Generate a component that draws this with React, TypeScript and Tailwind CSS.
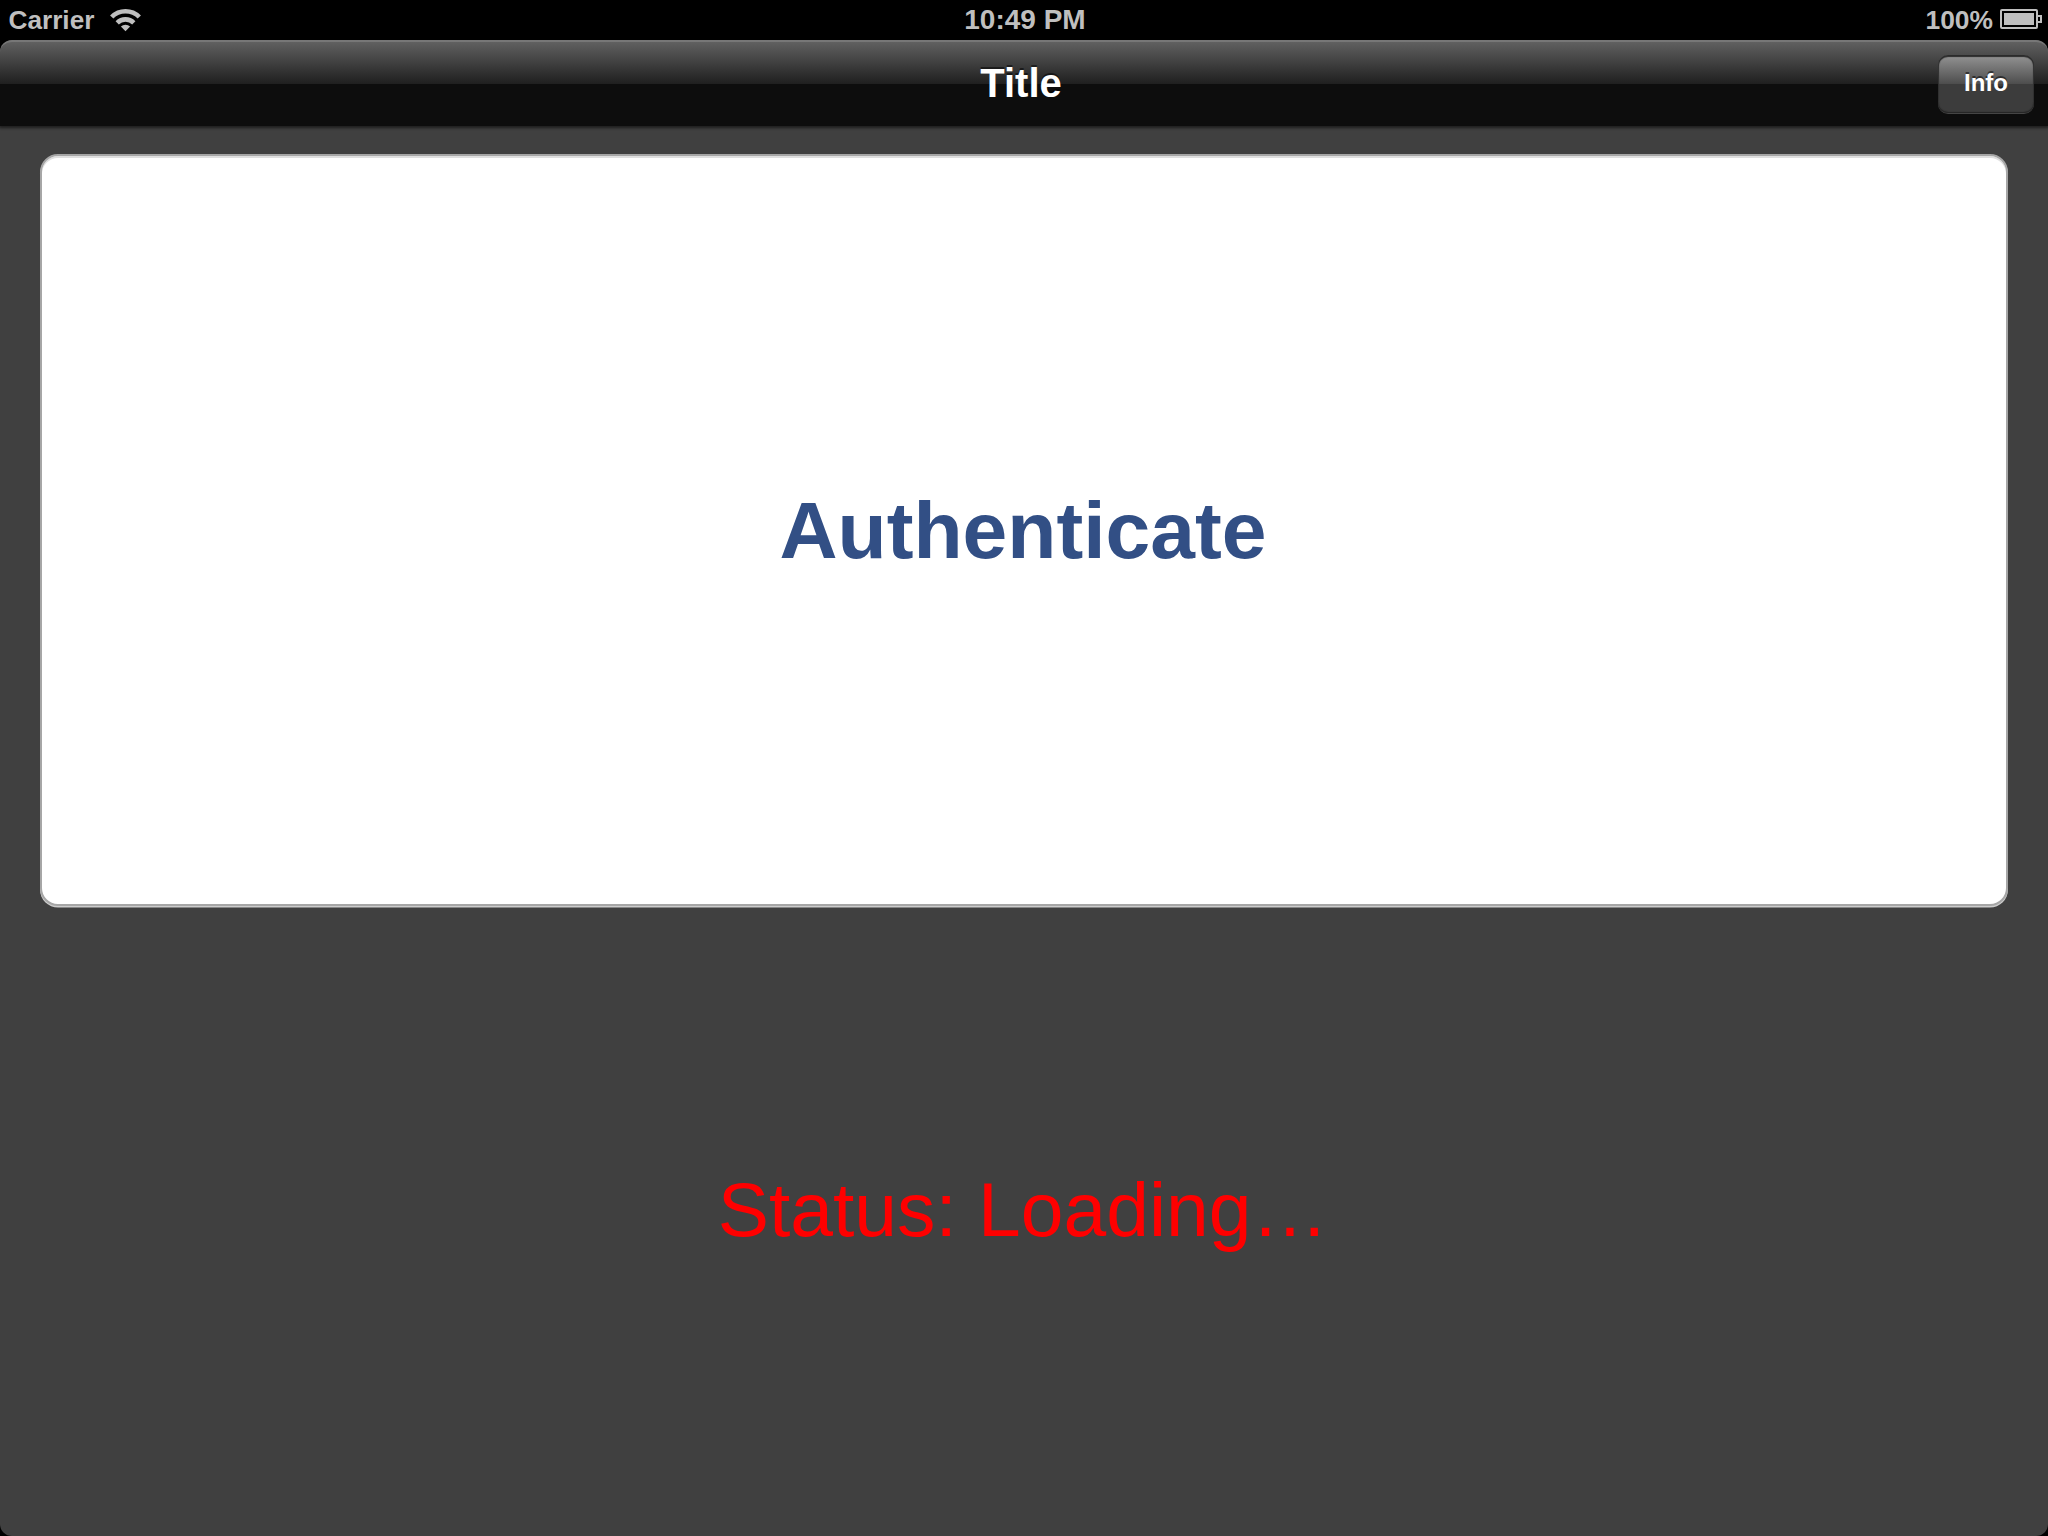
function Wifi() {
  return (
    <svg width="31" height="24" viewBox="0 0 31 24" className="ml-[16px] mt-[8px]">
      <g fill="none" stroke="#bfbfbf" strokeWidth="4.6">
        <path d="M1.7 9 A19.4 19.4 0 0 1 29.3 9" />
        <path d="M7.2 14.8 A11.8 11.8 0 0 1 23.8 14.8" />
      </g>
      <path d="M15.5 23.3 L10.9 18.6 A6.4 6.4 0 0 1 20.1 18.6 Z" fill="#bfbfbf" />
    </svg>
  );
}

function Battery() {
  return (
    <svg width="42" height="20" viewBox="0 0 42 20" className="ml-[7px] mt-[9px]">
      <rect x="1" y="1" width="36" height="18" rx="1" fill="none" stroke="#bfbfbf" strokeWidth="2" />
      <rect x="4" y="4" width="30" height="12" fill="#bfbfbf" />
      <path d="M38 7 H41 V13 H38" fill="none" stroke="#bfbfbf" strokeWidth="2" />
    </svg>
  );
}

function StatusBar() {
  return (
    <header className="grid h-10 grid-cols-3 bg-black font-bold text-[#bfbfbf]">
      <div className="flex items-start pl-[8.5px]">
        <span className="mt-px text-[26.2px] leading-[38px]">Carrier</span>
        <Wifi />
      </div>
      <div className="text-center text-[28px] leading-[40px]">
        <span className="relative left-[1px]">10:49 PM</span>
      </div>
      <div className="flex items-start justify-end pr-[6px]">
        <span className="mt-px text-[26.4px] leading-[38px]">100%</span>
        <Battery />
      </div>
    </header>
  );
}

function NavBar() {
  return (
    <nav className="grid h-[86px] shrink-0 grid-cols-[1fr_auto_1fr] items-center rounded-t-[12px] border-t-2 border-[#777] bg-[linear-gradient(to_bottom,#606060_0px,#1f1f1f_42px,#0d0d0d_42px,#0d0d0d_100%)] pr-[14px] font-bold text-white shadow-[0_1px_3px_1px_rgba(0,0,0,0.55)]">
      <span />
      <h1 className="relative left-[4px] -top-[1px] text-[40px] leading-[46px] [text-shadow:0_-2px_0_rgba(0,0,0,0.5)]">Title</h1>
      <button className="h-[58px] w-[96px] justify-self-end rounded-[10px] bg-[linear-gradient(to_bottom,#949494_0px,#4d4d4d_29px,#3c3c3c_29px,#3c3c3c_100%)] pb-[2px] text-[24px] leading-[54px] shadow-[inset_0_2px_1px_#2b2b2b,inset_0_-1px_1px_#252525,inset_1px_0_1px_#333,inset_-1px_0_1px_#333,0_1px_0_#454545] [text-shadow:0_-2px_0_rgba(0,0,0,0.5)]">
        Info
      </button>
    </nav>
  );
}

export default function App() {
  return (
    <div className="flex h-[1536px] w-[2048px] flex-col overflow-hidden bg-black font-['Liberation_Sans',Arial,sans-serif]">
      <StatusBar />
      <div className="flex flex-1 flex-col rounded-[12px] bg-[#404040]">
        <NavBar />
        <main className="flex flex-1 flex-col px-10 pt-7">
          <button className="h-[752px] rounded-[18px] border-2 border-[#a6a6a6] bg-white pr-[2px] text-[80.4px] font-bold text-[#324f85] shadow-[inset_0_2px_0_#e0e0e0,0_1.5px_0_#cccccc]">
            Authenticate
          </button>
          <p className="mt-[255px] pr-[2px] text-center text-[76.8px] leading-[96px] text-[#ff0000]">Status: Loading…</p>
        </main>
      </div>
    </div>
  );
}
